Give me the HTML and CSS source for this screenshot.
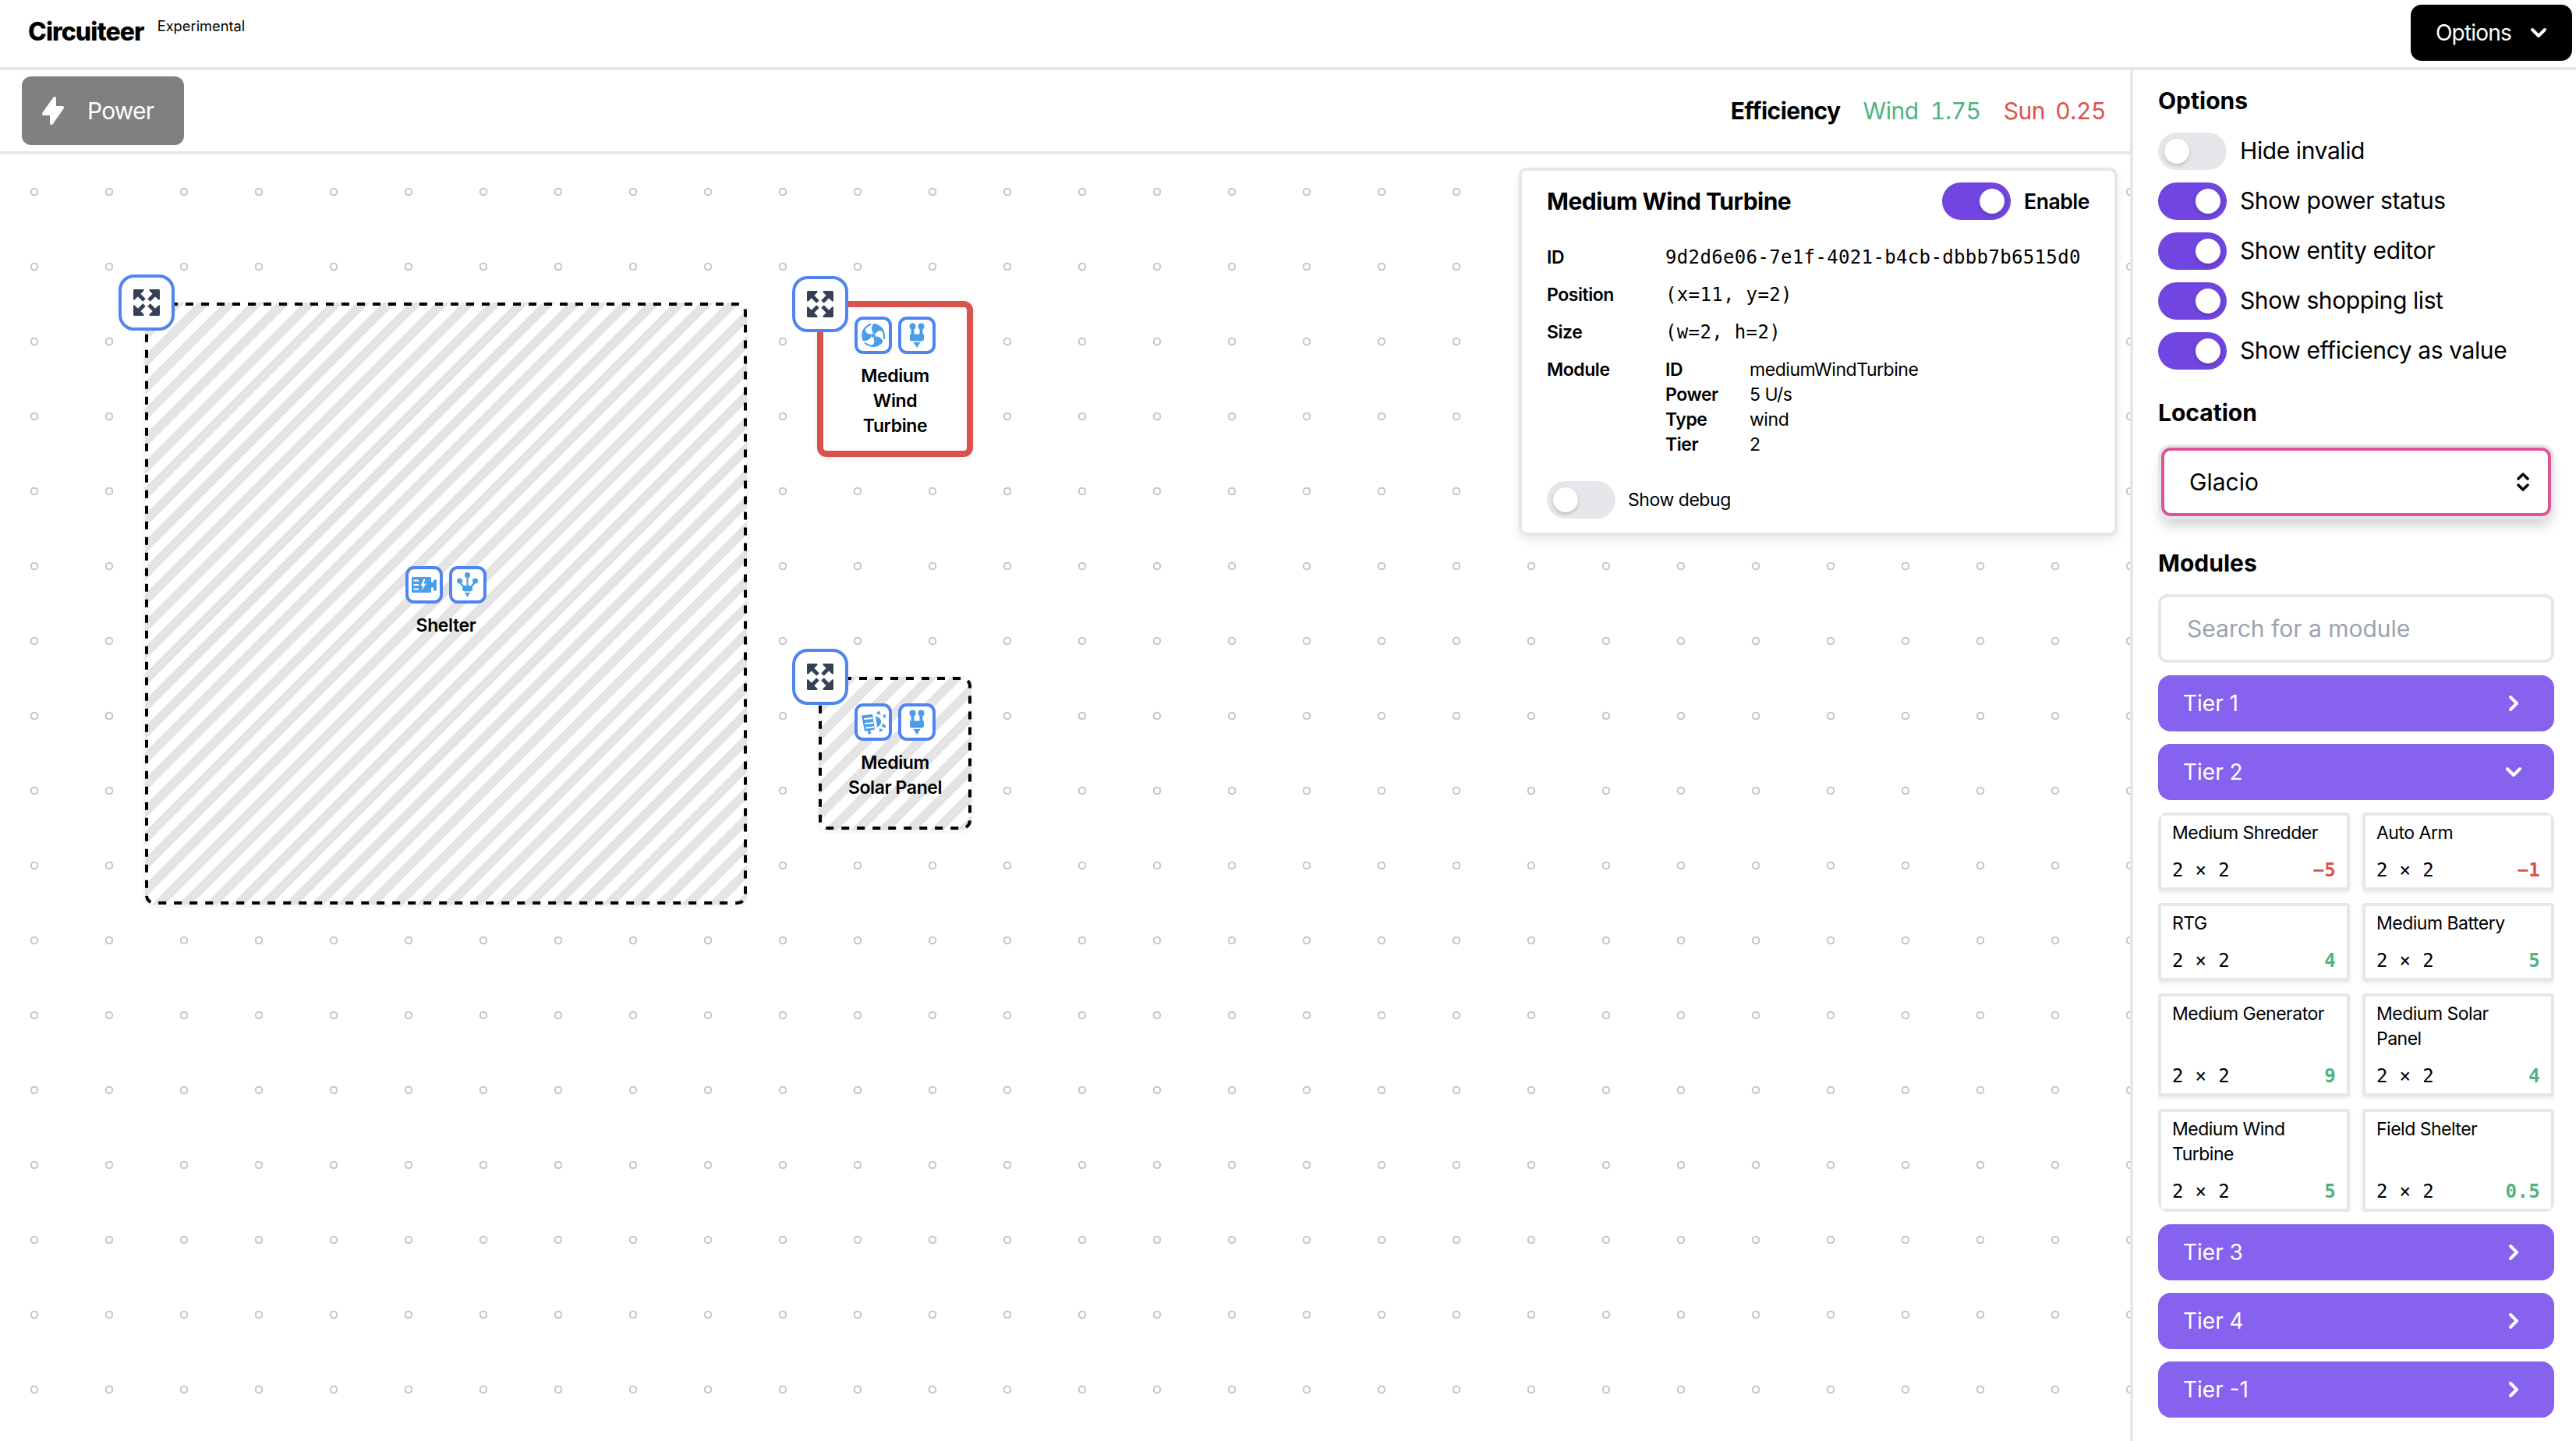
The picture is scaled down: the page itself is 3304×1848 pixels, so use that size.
FILE: index.html
```html
<!DOCTYPE html>
<html lang="en">
<head>
    <meta charset="UTF-8">
    <meta name="viewport" content="width=device-width, initial-scale=1.0">
    <title>Circuiteer</title>
    <link rel="stylesheet" href="styles.css">
</head>
<body>

    <svg class="defs" width="0" height="0">
        <symbol id="corner" viewBox="0 0 34 34">
            <path d="M1.5 0H12.5C13.5 0 14 1.2 13.3 1.9L1.9 13.3C1.2 14 0 13.5 0 12.5V1.5C0 .7.7 0 1.5 0Z"/>
            <path d="M5 5L14 14" stroke-width="5" stroke="currentColor"/>
        </symbol>
        <symbol id="expand" viewBox="0 0 34 34">
            <use href="#corner"/>
            <use href="#corner" transform="rotate(90 17 17)"/>
            <use href="#corner" transform="rotate(180 17 17)"/>
            <use href="#corner" transform="rotate(270 17 17)"/>
        </symbol>
        <symbol id="plug" viewBox="0 0 32 32">
            <circle cx="10.5" cy="4.5" r="4"/>
            <circle cx="21.5" cy="4.5" r="4"/>
            <path d="M8.5 6H12.5V14.5H19.5V6H23.5V14.5H25V21C25 22.5 24 23.5 22.5 23.5H9.5C8 23.5 7 22.5 7 21V14.5H8.5Z"/>
            <path d="M11.5 25H20.5L16 32Z"/>
        </symbol>
        <symbol id="generator" viewBox="0 0 32 32">
            <path d="M1.5 6H23.5C24.3 6 25 6.7 25 7.500V12.500H28V9.500H31C31.600 9.500 32 9.900 32 10.500V22.500C32 23 31.600 23.500 31 23.500H28V19.500H25V24.500C25 25.300 24.300 26 23.500 26H1.500C.7 26 0 25.300 0 24.500V7.500C0 6.700 .7 6 1.500 6Z"/>
            <path fill="#fff" d="M2.500 9.500H9V11.500H2.500ZM2.500 15H9V17H2.500ZM2.500 20.500H9V22.500H2.500ZM15.500 8.500L11.500 17.500H14.500L12.500 24L18.500 14.500H15.500L17.500 8.500Z"/>
        </symbol>
        <symbol id="branch" viewBox="0 0 32 32">
            <circle cx="15.500" cy="3.500" r="3.500"/>
            <circle cx="5.500" cy="11" r="3.500"/>
            <circle cx="25.500" cy="11" r="3.500"/>
            <path fill="none" stroke="currentColor" stroke-width="2.200" d="M15.500 3V18M5.500 11C5.500 15 9.500 15 10.500 19M25.500 11C25.500 15 21.500 15 20.500 19"/>
            <path d="M9 17H22V21C22 23.500 20.500 24.500 18.500 24.500H12.500C10.500 24.500 9 23.500 9 21Z"/>
            <path d="M12 26H19L15.500 32Z"/>
        </symbol>
        <symbol id="fan" viewBox="0 0 32 32">
            <g id="blade">
                <path d="M15.500 12.800C13.500 9 13.500 4.500 16.500 1C23 1.500 29 6 30.500 12.500C26 9 21 9.500 18.800 14.500C17.500 13.500 16.500 13 15.500 12.800Z"/>
                <path d="M3 11.500C5 7 8.500 3.500 12.500 2" fill="none" stroke="currentColor" stroke-width="2" stroke-linecap="round"/>
            </g>
            <use href="#blade" transform="rotate(120 16 16)"/>
            <use href="#blade" transform="rotate(240 16 16)"/>
            <circle cx="16" cy="16" r="2.600"/>
        </symbol>
        <symbol id="solar" viewBox="0 0 32 32">
            <path d="M1 7.500L15 6L18 25.500L12.500 26.500V29H14L11 32L8 29.500H9.500V27L5 27.800Z"/>
            <path fill="#fff" d="M4 11L15 10L15.300 12L4.400 13ZM5 17L16 16L16.300 18L5.400 19ZM6 22.500L17 21.500L17.300 23.500L6.400 24.500Z"/>
            <path d="M19 8.500C24 9.500 26.500 13 26 16C25.500 20 22.500 22 21 22.500Z"/>
            <path d="M20 5.500L23 1L26 6.500ZM28 7.500L32 6L31 12ZM28.500 17L32 21L32 23.500L27 22ZM24 24L29 26L24 29Z"/>
        </symbol>
        <symbol id="chev-right" viewBox="0 0 24 24">
            <polyline points="8,4 16,12 8,20"/>
        </symbol>
        <symbol id="chev-down" viewBox="0 0 24 24">
            <polyline points="4,8 12,16 20,8"/>
        </symbol>
    </svg>

    <header class="topbar">
        <div class="brand">
            <span class="logo">Circuiteer</span>
            <span class="tag">Experimental</span>
        </div>
        <button class="options-btn">Options
            <svg class="chev"><use href="#chev-down"/></svg>
        </button>
    </header>

    <div class="main">
        <div class="workspace">
            <div class="toolbar">
                <button class="power-btn">
                    <svg class="bolt" viewBox="0 0 20 20"><path d="M11.300 1.046A1 1 0 0112 2v5h4a1 1 0 01.82 1.573l-7 10A1 1 0 018 18v-5H4a1 1 0 01-.82-1.573l7-10a1 1 0 011.12-.38z"/></svg>
                    Power
                </button>
                <div class="efficiency">
                    <strong>Efficiency</strong>
                    <span class="good"><span>Wind</span><span>1.75</span></span>
                    <span class="bad"><span>Sun</span><span>0.25</span></span>
                </div>
            </div>

            <div class="canvas">
                <div class="entity ghost shelter">
                    <svg class="dash"><rect x="2" y="2" width="768" height="768" rx="10"/></svg>
                    <button class="expand"><svg><use href="#expand"/></svg></button>
                    <div class="badges">
                        <span class="badge"><svg><use href="#generator"/></svg></span>
                        <span class="badge"><svg><use href="#branch"/></svg></span>
                    </div>
                    <div class="entity-name">Shelter</div>
                </div>

                <div class="entity selected turbine">
                    <button class="expand"><svg><use href="#expand"/></svg></button>
                    <div class="badges">
                        <span class="badge"><svg><use href="#fan"/></svg></span>
                        <span class="badge"><svg><use href="#plug"/></svg></span>
                    </div>
                    <div class="entity-name">Medium<br>Wind<br>Turbine</div>
                </div>

                <div class="entity ghost solar">
                    <svg class="dash"><rect x="2" y="2" width="192" height="192" rx="10"/></svg>
                    <button class="expand"><svg><use href="#expand"/></svg></button>
                    <div class="badges">
                        <span class="badge"><svg><use href="#solar"/></svg></span>
                        <span class="badge"><svg><use href="#plug"/></svg></span>
                    </div>
                    <div class="entity-name">Medium<br>Solar Panel</div>
                </div>

                <div class="editor">
                    <div class="editor-head">
                        <h3>Medium Wind Turbine</h3>
                        <span class="toggle on"></span>
                        <b>Enable</b>
                    </div>
                    <div class="details">
                        <b>ID</b><code>9d2d6e06-7e1f-4021-b4cb-dbbb7b6515d0</code>
                        <b>Position</b><code>(x=11, y=2)</code>
                        <b>Size</b><code>(w=2, h=2)</code>
                        <b>Module</b>
                        <div class="module-info">
                            <b>ID</b><span>mediumWindTurbine</span>
                            <b>Power</b><span>5 U/s</span>
                            <b>Type</b><span>wind</span>
                            <b>Tier</b><span>2</span>
                        </div>
                    </div>
                    <div class="debug-row">
                        <span class="toggle"></span>
                        <span>Show debug</span>
                    </div>
                </div>
            </div>
        </div>

        <aside class="sidebar">
            <h2>Options</h2>
            <div class="toggle-list">
                <div class="toggle-row"><span class="toggle"></span><span>Hide invalid</span></div>
                <div class="toggle-row"><span class="toggle on"></span><span>Show power status</span></div>
                <div class="toggle-row"><span class="toggle on"></span><span>Show entity editor</span></div>
                <div class="toggle-row"><span class="toggle on"></span><span>Show shopping list</span></div>
                <div class="toggle-row"><span class="toggle on"></span><span>Show efficiency as value</span></div>
            </div>

            <h2 class="location-title">Location</h2>
            <div class="select-wrap">
                <select class="location">
                    <option>Glacio</option>
                </select>
                <svg class="updown" viewBox="0 0 16 28">
                    <polyline points="2,10 8,4 14,10"/>
                    <polyline points="2,18 8,24 14,18"/>
                </svg>
            </div>

            <h2 class="modules-title">Modules</h2>
            <input class="search" type="text" placeholder="Search for a module">

            <div class="tier">Tier 1 <svg class="chev right"><use href="#chev-right"/></svg></div>
            <div class="tier">Tier 2 <svg class="chev"><use href="#chev-down"/></svg></div>

            <div class="module-grid">
                <div class="module">
                    <div class="module-name">Medium Shredder</div>
                    <div class="module-foot"><code>2 × 2</code><code class="neg">−5</code></div>
                </div>
                <div class="module">
                    <div class="module-name">Auto Arm</div>
                    <div class="module-foot"><code>2 × 2</code><code class="neg">−1</code></div>
                </div>
                <div class="module">
                    <div class="module-name">RTG</div>
                    <div class="module-foot"><code>2 × 2</code><code class="pos">4</code></div>
                </div>
                <div class="module">
                    <div class="module-name">Medium Battery</div>
                    <div class="module-foot"><code>2 × 2</code><code class="pos">5</code></div>
                </div>
                <div class="module tall">
                    <div class="module-name">Medium Generator</div>
                    <div class="module-foot"><code>2 × 2</code><code class="pos">9</code></div>
                </div>
                <div class="module tall">
                    <div class="module-name">Medium Solar<br>Panel</div>
                    <div class="module-foot"><code>2 × 2</code><code class="pos">4</code></div>
                </div>
                <div class="module tall">
                    <div class="module-name">Medium Wind Turbine</div>
                    <div class="module-foot"><code>2 × 2</code><code class="pos">5</code></div>
                </div>
                <div class="module tall">
                    <div class="module-name">Field Shelter</div>
                    <div class="module-foot"><code>2 × 2</code><code class="pos">0.5</code></div>
                </div>
            </div>

            <div class="tier">Tier 3 <svg class="chev right"><use href="#chev-right"/></svg></div>
            <div class="tier">Tier 4 <svg class="chev right"><use href="#chev-right"/></svg></div>
            <div class="tier">Tier -1 <svg class="chev right"><use href="#chev-right"/></svg></div>
        </aside>
    </div>

</body>
</html>
```

FILE: styles.css
```css
* {
    box-sizing: border-box;
}
html, body {
    height: 100%;
}
body {
    margin: 0;
    overflow: hidden;
    background: #fff;
    color: #000;
    font-family: "Inter", "Liberation Sans", sans-serif;
    font-size: 24px;
    line-height: 32px;
}
button, input, select {
    font: inherit;
}
code {
    font-family: "DejaVu Sans Mono", monospace;
    font-size: 24px;
    letter-spacing: 0.35px;
}
.defs {
    position: absolute;
}

/* top bar */
.topbar {
    height: 90px;
    border-bottom: 4px solid #e5e7eb;
    display: flex;
    justify-content: space-between;
    padding: 6px 5px 0 36px;
}
.brand {
    display: flex;
    align-items: flex-start;
    gap: 17px;
}
.logo {
    font-size: 32px;
    font-weight: 800;
    line-height: 40px;
    letter-spacing: -0.9px;
    margin-top: 15px;
}
.tag {
    font-size: 18.3px;
    line-height: 24px;
    margin-top: 15px;
}
.options-btn {
    height: 72px;
    width: 207px;
    background: #000;
    color: #fff;
    border: none;
    border-radius: 14px;
    font-size: 28px;
    letter-spacing: -0.8px;
    display: flex;
    align-items: center;
    padding: 0 31px 0 32px;
    justify-content: space-between;
}
.chev {
    width: 24px;
    height: 24px;
    fill: none;
    stroke: #fff;
    stroke-width: 4;
    stroke-linecap: round;
    stroke-linejoin: round;
}

.main {
    display: flex;
    height: calc(100% - 90px);
}
.workspace {
    flex: 1;
    display: flex;
    flex-direction: column;
}

/* toolbar */
.toolbar {
    height: 108px;
    border-bottom: 4px solid #e5e7eb;
    display: flex;
    justify-content: space-between;
    align-items: center;
    padding: 0 31px 0 28px;
}
.power-btn {
    width: 208px;
    height: 88px;
    background: #808080;
    color: #fff;
    border: none;
    border-radius: 12px;
    font-size: 30px;
    letter-spacing: -0.8px;
    display: flex;
    align-items: center;
    gap: 24px;
    padding: 0 0 0 20px;
}
.bolt {
    width: 40px;
    height: 40px;
    fill: #fff;
}
.efficiency {
    display: flex;
    align-items: center;
    gap: 29px;
    font-size: 30px;
    font-variant-numeric: tabular-nums;
}
.efficiency strong {
    letter-spacing: -0.6px;
}
.good, .bad {
    display: flex;
    letter-spacing: -0.4px;
}
.good {
    gap: 15px;
    color: #4db380;
}
.bad {
    gap: 13px;
    color: #dc524d;
}

/* canvas */
.canvas {
    flex: 1;
    position: relative;
    background-image: radial-gradient(circle at center, transparent 3px, #c8c8c8 3.6px, #c8c8c8 5px, transparent 5.6px);
    background-size: 96px 96px;
    background-position: -4px 0;
}
.entity {
    position: absolute;
    display: flex;
    flex-direction: column;
    align-items: center;
    justify-content: center;
    padding-bottom: 4px;
    border-radius: 12px;
    font-weight: 600;
    text-align: center;
    box-shadow: 0 2px 6px rgba(0, 0, 0, 0.08);
}
.ghost {
    background: repeating-linear-gradient(135deg, #e4e4e4 0, #e4e4e4 12px, #fff 12px, #fff 24px);
}
.shelter {
    left: 186px;
    top: 190px;
    width: 772px;
    height: 772px;
}
.turbine {
    left: 1048px;
    top: 188px;
    width: 200px;
    height: 200px;
    background: #fff;
    border: 8px solid #d9524e;
}
.solar {
    left: 1050px;
    top: 670px;
    width: 196px;
    height: 196px;
}
.dash {
    position: absolute;
    left: 0;
    top: 0;
    width: 100%;
    height: 100%;
    fill: none;
    stroke: #000;
    stroke-width: 4;
    stroke-dasharray: 10 10;
}
.expand {
    position: absolute;
    left: -34px;
    top: -36px;
    width: 72px;
    height: 72px;
    padding: 0;
    background: #fff;
    border: 4px solid #4f85ef;
    border-radius: 20px;
    display: flex;
    align-items: center;
    justify-content: center;
    color: #374155;
    z-index: 2;
}
.selected .expand {
    left: -40px;
    top: -40px;
}
.expand svg {
    width: 34px;
    height: 34px;
    fill: #374155;
}
.badges {
    display: flex;
    gap: 8px;
    margin-bottom: 12px;
    position: relative;
}
.badge {
    width: 48px;
    height: 48px;
    background: #fff;
    border: 4px solid #4f85ef;
    border-radius: 11px;
    display: flex;
    align-items: center;
    justify-content: center;
    color: #4a9de8;
}
.badge svg {
    width: 32px;
    height: 32px;
    fill: #4a9de8;
}
.entity-name {
    position: relative;
    font-size: 23px;
    letter-spacing: -0.4px;
}

/* entity editor */
.editor {
    position: absolute;
    top: 17px;
    right: 16px;
    width: 768px;
    height: 472px;
    background: #fff;
    border: 4px solid #e5e7eb;
    border-radius: 10px;
    padding: 15px 32px 0;
    box-shadow: 0 6px 12px rgba(0, 0, 0, 0.08);
    font-size: 23px;
    letter-spacing: -0.45px;
}
.editor-head {
    display: flex;
    align-items: center;
    gap: 17px;
    font-size: 26.5px;
}
.editor-head h3 {
    flex: 1;
    margin: 0;
    font-size: 30px;
    font-weight: 700;
    letter-spacing: -0.5px;
}
.editor-head b {
    font-weight: 600;
}
.details {
    display: grid;
    grid-template-columns: 152px 1fr;
    row-gap: 16px;
    margin-top: 32px;
}
.details b, .module-info b {
    font-weight: 600;
}
.module-info {
    display: grid;
    grid-template-columns: 108px 1fr;
}
.debug-row {
    display: flex;
    align-items: center;
    gap: 16px;
    margin-top: 31px;
}

/* toggle */
.toggle {
    width: 88px;
    height: 48px;
    flex: none;
    padding: 8px;
    background: #e5e7eb;
    border-radius: 24px;
    display: flex;
}
.toggle::after {
    content: "";
    width: 32px;
    height: 32px;
    background: #fff;
    border-radius: 50%;
    box-shadow: 0 2px 4px rgba(0, 0, 0, 0.2);
}
.toggle.on {
    background: #7045e0;
    justify-content: flex-end;
}

/* sidebar */
.sidebar {
    width: 572px;
    flex: none;
    height: 100%;
    border-left: 4px solid #e5e7eb;
    padding: 19px 28px 0 32px;
    overflow: hidden;
    font-size: 24px;
}
.sidebar h2 {
    margin: 0 0 21px;
    font-size: 30px;
    line-height: 40px;
    font-weight: 700;
}
.toggle-list {
    display: flex;
    flex-direction: column;
    gap: 16px;
    font-size: 30px;
    letter-spacing: -0.4px;
}
.toggle-row {
    display: flex;
    align-items: center;
    gap: 17px;
}
.toggle-row span:last-child {
    margin-top: -3px;
}
.sidebar .location-title {
    margin-top: 35px;
    margin-bottom: 25px;
}
.select-wrap {
    position: relative;
    margin: 0 4px;
}
.location {
    display: block;
    width: 100%;
    height: 88px;
    appearance: none;
    background: #fff;
    border: 4px solid #de5596;
    border-radius: 12px;
    padding: 0 32px;
    font-size: 30px;
    color: #000;
    box-shadow: 0 0 0 4px #e5e7eb, 0 12px 16px rgba(0, 0, 0, 0.18);
    outline: none;
}
.updown {
    position: absolute;
    right: 28px;
    top: 30px;
    width: 16px;
    height: 28px;
    fill: none;
    stroke: #000;
    stroke-width: 3.5;
    stroke-linecap: round;
    stroke-linejoin: round;
}
.sidebar .modules-title {
    margin-top: 40px;
    margin-bottom: 20px;
}
.search {
    display: block;
    width: 100%;
    height: 88px;
    border: 4px solid #e5e7eb;
    border-radius: 12px;
    padding: 0 33px;
    font-size: 30px;
    margin-bottom: 16px;
    outline: none;
}
.search::placeholder {
    color: #9ca3af;
}
.tier {
    height: 72px;
    margin-bottom: 16px;
    background: #8662ee;
    color: #fff;
    border-radius: 16px;
    font-size: 28px;
    display: flex;
    align-items: center;
    justify-content: space-between;
    padding: 0 40px 0 32px;
}
.module-grid {
    display: grid;
    grid-template-columns: 1fr 1fr;
    gap: 16px;
    margin-bottom: 16px;
    border-radius: 12px;
    overflow: hidden;
    height: 512px;
}
.module {
    height: 100px;
    border: 4px solid #e5e7eb;
    border-radius: 4px;
    padding: 6px 14px;
    display: flex;
    flex-direction: column;
    justify-content: space-between;
    box-shadow: 0 3px 5px rgba(0, 0, 0, 0.08);
}
.module.tall {
    height: 132px;
}
.module-name {
    font-size: 23px;
    letter-spacing: -0.5px;
}
.module-foot {
    display: flex;
    justify-content: space-between;
}
.neg, .pos {
    font-weight: 700;
}
.neg {
    color: #dc524d;
}
.pos {
    color: #4db380;
}
```
